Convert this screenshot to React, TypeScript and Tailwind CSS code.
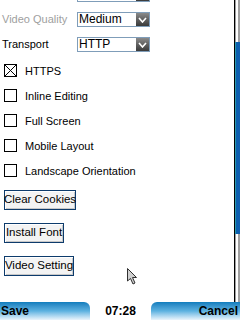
import React from 'react';

const font = { fontFamily: '"Liberation Sans", Arial, sans-serif' };

const Select = ({ value }: { value: string }) => (
  <div className="flex h-[15px] w-[73px] border border-[#7f9db9] bg-white">
    <div className="flex-1 pl-[1px] text-[12px] leading-[13px] text-black">{value}</div>
    <div className="flex w-[13px] items-center justify-center bg-gradient-to-b from-[#8a8a8a] to-[#3a3a3a]">
      <svg width="9" height="6" viewBox="0 0 9 6">
        <path d="M1 1 L4.5 5 L8 1" stroke="white" strokeWidth="1.6" fill="none" />
      </svg>
    </div>
  </div>
);

const Checkbox = ({ label, checked }: { label: string; checked?: boolean }) => (
  <div className="flex h-[25px] items-center">
    <div className="ml-[4px] h-[13px] w-[13px] border border-black bg-white">
      {checked && (
        <svg width="11" height="11" viewBox="0 0 11 11">
          <path d="M0 0 L11 11 M11 0 L0 11" stroke="black" strokeWidth="1" />
        </svg>
      )}
    </div>
    <span className="ml-[8px] whitespace-nowrap text-[11px] leading-[14px] text-black">{label}</span>
  </div>
);

const Button = ({ label, width }: { label: string; width: string }) => (
  <div
    className={`ml-[4px] flex h-[20px] items-center justify-center whitespace-nowrap border border-[#0d3b6c] bg-[#f3f3f3] text-[11.5px] text-black shadow-[inset_1px_1px_0_#ffffff,inset_-1px_-1px_0_#c8c8c8] ${width}`}
  >
    {label}
  </div>
);

export default function App() {
  return (
    <div className="relative flex h-[320px] w-[240px] flex-col overflow-hidden bg-white" style={font}>
      {/* content + scrollbar */}
      <div className="flex h-[302px]">
        <div className="flex flex-1 flex-col overflow-hidden">
          <div className="-mt-[13px] flex flex-col">
            <div className="ml-[77px]">
              <Select value="" />
            </div>
            <div className="mt-[10px] flex h-[15px] items-center">
              <span className="w-[77px] whitespace-nowrap pl-[2px] text-[11px] leading-[15px] text-[#a0a0a0]">Video Quality</span>
              <Select value="Medium" />
            </div>
            <div className="mt-[10px] flex h-[15px] items-center">
              <span className="w-[77px] pl-[2px] text-[11px] leading-[15px] text-black">Transport</span>
              <Select value="HTTP" />
            </div>
            <div className="mt-[6px] flex flex-col">
              <Checkbox label="HTTPS" checked />
              <Checkbox label="Inline Editing" />
              <Checkbox label="Full Screen" />
              <Checkbox label="Mobile Layout" />
              <Checkbox label="Landscape Orientation" />
            </div>
            <div className="mt-[7px] flex flex-col gap-[13px]">
              <Button label="Clear Cookies" width="w-[72px]" />
              <Button label="Install Font" width="w-[60px]" />
              <Button label="Video Setting" width="w-[70px]" />
            </div>
          </div>
        </div>
        {/* scrollbar */}
        <div className="flex w-[6px] flex-col border-l border-black">
          <div className="h-[42px] bg-[linear-gradient(to_right,#a0a0a0_0px,#a0a0a0_1px,#ffffff_1px,#ffffff_3px,#a0a0a0_3px)]" />
          <div className="h-[192px] bg-[linear-gradient(to_right,#2a9aa8_0px,#2a9aa8_1px,#0d5faf_1px)]" />
          <div className="flex-1 bg-[linear-gradient(to_right,#a0a0a0_0px,#a0a0a0_1px,#ffffff_1px,#ffffff_3px,#a0a0a0_3px)]" />
        </div>
      </div>
      {/* softkey bar */}
      <div className="flex h-[18px] items-stretch">
        <div className="flex w-[90px] items-center rounded-tr-[6px] bg-gradient-to-b from-[#0e7dbd] via-[#5cb2e0] to-[#eaf5fc] pl-[1px] text-[12px] font-bold text-black">
          Save
        </div>
        <div className="flex flex-1 items-center justify-center text-[12px] font-bold text-black">07:28</div>
        <div className="flex w-[89px] items-center justify-end rounded-tl-[6px] bg-gradient-to-b from-[#0e7dbd] via-[#5cb2e0] to-[#eaf5fc] pr-[2px] text-[12px] font-bold text-black">
          Cancel
        </div>
      </div>
      {/* mouse pointer */}
      <svg className="absolute left-[127px] top-[268px]" width="11" height="17" viewBox="0 0 11 17">
        <path d="M0.5 0.5 L0.5 13 L3.5 10.5 L6 16 L8 15 L5.5 9.5 L9.5 9.5 Z" fill="#d0d0d0" stroke="#303030" strokeWidth="1" />
      </svg>
    </div>
  );
}
